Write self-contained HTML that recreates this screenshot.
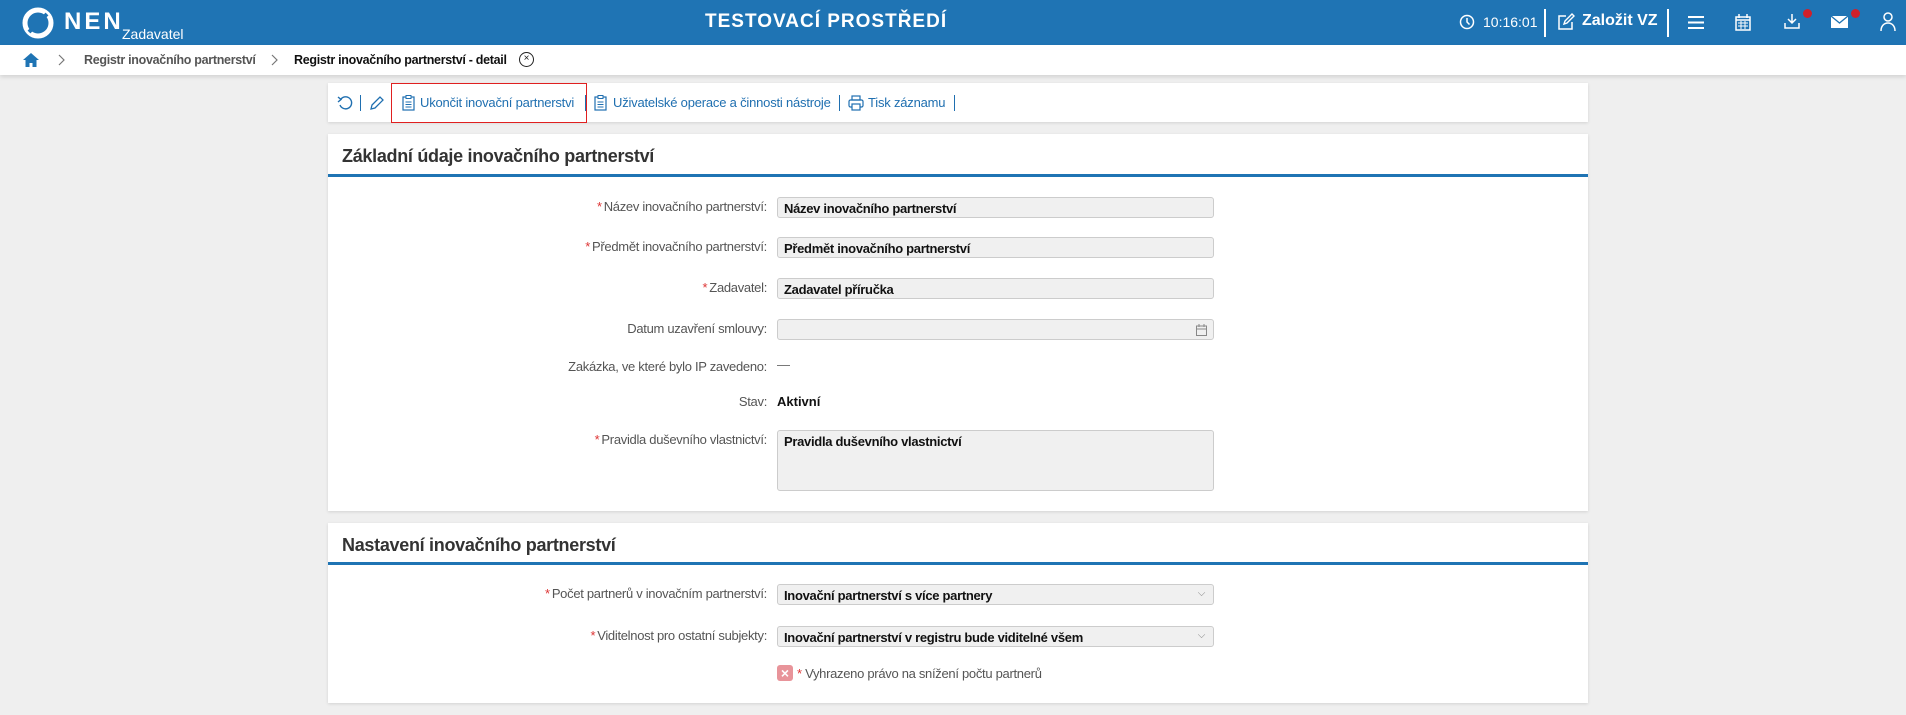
<!DOCTYPE html>
<html><head><meta charset="utf-8">
<style>
*{box-sizing:border-box;margin:0;padding:0}
body{width:1906px;height:715px;background:#efefef;font-family:"Liberation Sans",Arial,sans-serif;position:relative;overflow:hidden;color:#222}
.a{position:absolute;white-space:nowrap}
.hdr{left:0;top:0;width:1906px;height:45px;background:#1f74b4}
.w{color:#fff}
.bc{left:0;top:45px;width:1906px;height:30px;background:#fff;box-shadow:0 2px 4px rgba(0,0,0,.12)}
.card{background:#fff;box-shadow:0 1px 3px rgba(0,0,0,.12)}
.tb{font-size:13px;color:#1f6fb0;letter-spacing:-.2px}
.sep{width:1px;height:16px;background:#1f6fb0}
.h{font-size:18px;font-weight:bold;color:#333;letter-spacing:-.3px}
.line{height:3px;background:#1f74b4}
.lbl{font-size:13px;color:#555;text-align:right;right:1139px;letter-spacing:-.3px}
.lbl b{color:#d33;font-weight:normal;margin-right:2px}
.inp{left:777px;width:437px;height:21px;background:#f0f0f0;border:1px solid #ccc;border-radius:3px;font-size:13px;font-weight:bold;padding:3px 6px;letter-spacing:-.3px;color:#111}
.chev{position:absolute;right:8px;top:3px;font-size:10px;color:#888;font-weight:normal}
</style></head><body>
<div class="a hdr"></div>
<svg class="a" style="left:22px;top:7px" width="32" height="32" viewBox="0 0 32 32"><circle cx="16" cy="16" r="13" fill="none" stroke="#fff" stroke-width="5"/><path d="M7 25 L25 7" stroke="#1f74b4" stroke-width="4"/></svg>
<div class="a w" style="left:64px;top:8px;font-size:24px;font-weight:bold;letter-spacing:3px">NEN</div>
<div class="a w" style="left:122px;top:26px;font-size:14px">Zadavatel</div>
<div class="a w" style="left:705px;top:11px;font-size:19px;font-weight:bold;letter-spacing:1px">TESTOVACÍ PROSTŘEDÍ</div>
<svg class="a" style="left:1459px;top:14px" width="16" height="16" viewBox="0 0 16 16"><circle cx="8" cy="8" r="6.5" fill="none" stroke="#fff" stroke-width="1.5"/><path d="M8 4v4l2.5 2.5" fill="none" stroke="#fff" stroke-width="1.5"/></svg>
<div class="a w" style="left:1483px;top:14px;font-size:14px">10:16:01</div>
<div class="a" style="left:1544px;top:9px;width:2px;height:28px;background:#fff"></div>
<svg class="a" style="left:1557px;top:13px" width="18" height="18" viewBox="0 0 18 18"><path d="M9 3H2v13h13V9" fill="none" stroke="#fff" stroke-width="1.5"/><path d="M7 11l1-3 7-7 2 2-7 7z" fill="none" stroke="#fff" stroke-width="1.4"/></svg>
<div class="a w" style="left:1582px;top:12px;font-size:16px;font-weight:bold">Založit VZ</div>
<div class="a" style="left:1667px;top:9px;width:2px;height:28px;background:#fff"></div>
<svg class="a" style="left:1688px;top:15px" width="16" height="15"><path d="M0 2h16M0 7.5h16M0 13h16" stroke="#fff" stroke-width="2"/></svg>
<svg class="a" style="left:1735px;top:14px" width="16" height="17" viewBox="0 0 16 17"><rect x="1" y="3" width="14" height="13" fill="none" stroke="#fff" stroke-width="1.5"/><path d="M4 0v4M12 0v4M1 6h14" stroke="#fff" stroke-width="1.5"/><path d="M3 9h10M3 12h10M6 7v8M10 7v8" stroke="#fff" stroke-width="1"/></svg>
<svg class="a" style="left:1784px;top:13px" width="16" height="17" viewBox="0 0 16 17"><path d="M8 1v9M4 6l4 4 4-4" fill="none" stroke="#fff" stroke-width="1.5"/><path d="M1 10v5h14v-5" fill="none" stroke="#fff" stroke-width="1.5"/></svg>
<div class="a" style="left:1803px;top:9px;width:9px;height:9px;border-radius:50%;background:#d0202a"></div>
<svg class="a" style="left:1831px;top:16px" width="17" height="12" viewBox="0 0 17 12"><rect width="17" height="12" fill="#fff"/><path d="M0 0l8.5 7L17 0" fill="none" stroke="#1f74b4" stroke-width="1.3"/></svg>
<div class="a" style="left:1851px;top:9px;width:9px;height:9px;border-radius:50%;background:#d0202a"></div>
<svg class="a" style="left:1880px;top:12px" width="16" height="19" viewBox="0 0 16 19"><circle cx="8" cy="5" r="4" fill="none" stroke="#fff" stroke-width="1.5"/><path d="M1 19c0-5 3-8 7-8s7 3 7 8" fill="none" stroke="#fff" stroke-width="1.5"/></svg>

<div class="a bc"></div>
<svg class="a" style="left:22px;top:52px" width="18" height="16" viewBox="0 0 18 16"><path d="M9 1L1 8h2.5v7h4v-4h3v4h4V8H17z" fill="#1f74b4"/></svg>
<svg class="a" style="left:58px;top:54px" width="7" height="12"><path d="M1 1l5 5-5 5" fill="none" stroke="#777" stroke-width="1.2"/></svg>
<div class="a" style="left:84px;top:53px;font-size:12.5px;color:#555;font-weight:bold;letter-spacing:-.3px">Registr inovačního partnerství</div>
<svg class="a" style="left:271px;top:54px" width="7" height="12"><path d="M1 1l5 5-5 5" fill="none" stroke="#777" stroke-width="1.2"/></svg>
<div class="a" style="left:294px;top:53px;font-size:12.5px;color:#111;font-weight:bold;letter-spacing:-.3px">Registr inovačního partnerství - detail</div>
<div class="a" style="left:519px;top:52px;width:15px;height:15px;border:1.5px solid #222;border-radius:50%;font-size:10px;line-height:12px;text-align:center">×</div>

<div class="a card" style="left:328px;top:83px;width:1260px;height:39px"></div>
<svg class="a" style="left:337px;top:95px" width="16" height="16" viewBox="0 0 16 16"><path d="M4 4a6 6 0 1 1-1 6" fill="none" stroke="#1f6fb0" stroke-width="1.4"/><path d="M1 2l3 2.5L1 7" fill="none" stroke="#1f6fb0" stroke-width="1.4"/></svg>
<div class="a sep" style="left:360px;top:95px"></div>
<svg class="a" style="left:369px;top:95px" width="15" height="16" viewBox="0 0 15 16"><path d="M2 14l1-4 8-8 3 3-8 8z M2 14l4-1" fill="none" stroke="#1f6fb0" stroke-width="1.3"/></svg>
<div class="a sep" style="left:391px;top:95px"></div>
<div class="a" style="left:391px;top:83px;width:196px;height:40px;border:1px solid #e02020"></div>
<svg class="a" style="left:402px;top:95px" width="13" height="16" viewBox="0 0 13 16"><rect x="1" y="2" width="11" height="13" fill="none" stroke="#1f6fb0" stroke-width="1.2"/><rect x="4" y="0.5" width="5" height="3" fill="#fff" stroke="#1f6fb0"/><path d="M3.5 7h6M3.5 9.5h6M3.5 12h6" stroke="#1f6fb0"/></svg>
<div class="a tb" style="left:420px;top:95px">Ukončit inovační partnerstvi</div>
<div class="a sep" style="left:585px;top:95px"></div>
<svg class="a" style="left:594px;top:95px" width="13" height="16" viewBox="0 0 13 16"><rect x="1" y="2" width="11" height="13" fill="none" stroke="#1f6fb0" stroke-width="1.2"/><rect x="4" y="0.5" width="5" height="3" fill="#fff" stroke="#1f6fb0"/><path d="M3.5 7h6M3.5 9.5h6M3.5 12h6" stroke="#1f6fb0"/></svg>
<div class="a tb" style="left:613px;top:95px">Uživatelské operace a činnosti nástroje</div>
<div class="a sep" style="left:839px;top:95px"></div>
<svg class="a" style="left:848px;top:95px" width="16" height="16" viewBox="0 0 16 16"><rect x="4" y="1" width="8" height="4" fill="none" stroke="#1f6fb0" stroke-width="1.2"/><rect x="1" y="5" width="14" height="7" rx="1.5" fill="none" stroke="#1f6fb0" stroke-width="1.2"/><rect x="4" y="9" width="8" height="6" fill="#fff" stroke="#1f6fb0" stroke-width="1.2"/></svg>
<div class="a tb" style="left:868px;top:95px">Tisk záznamu</div>
<div class="a sep" style="left:954px;top:95px"></div>

<div class="a card" style="left:328px;top:134px;width:1260px;height:377px"></div>
<div class="a h" style="left:342px;top:146px">Základní údaje inovačního partnerství</div>
<div class="a line" style="left:328px;top:174px;width:1260px"></div>

<div class="a lbl" style="top:199px"><b>*</b>Název inovačního partnerství:</div>
<div class="a inp" style="top:197px">Název inovačního partnerství</div>
<div class="a lbl" style="top:239px"><b>*</b>Předmět inovačního partnerství:</div>
<div class="a inp" style="top:237px">Předmět inovačního partnerství</div>
<div class="a lbl" style="top:280px"><b>*</b>Zadavatel:</div>
<div class="a inp" style="top:278px">Zadavatel příručka</div>
<div class="a lbl" style="top:321px">Datum uzavření smlouvy:</div>
<div class="a inp" style="top:319px"><svg style="position:absolute;right:6px;top:4px" width="11" height="12" viewBox="0 0 11 12"><rect x=".5" y="2" width="10" height="9.5" fill="none" stroke="#888"/><path d="M3 0v3M8 0v3M.5 5h10" stroke="#888"/></svg></div>
<div class="a lbl" style="top:359px">Zakázka, ve které bylo IP zavedeno:</div>
<div class="a" style="left:777px;top:357px;font-size:13px;color:#666">—</div>
<div class="a lbl" style="top:394px">Stav:</div>
<div class="a" style="left:777px;top:394px;font-size:13px;font-weight:bold;color:#111">Aktivní</div>
<div class="a lbl" style="top:432px"><b>*</b>Pravidla duševního vlastnictví:</div>
<div class="a inp" style="top:430px;height:61px">Pravidla duševního vlastnictví</div>

<div class="a card" style="left:328px;top:523px;width:1260px;height:180px"></div>
<div class="a h" style="left:342px;top:535px">Nastavení inovačního partnerství</div>
<div class="a line" style="left:328px;top:562px;width:1260px"></div>
<div class="a lbl" style="top:586px"><b>*</b>Počet partnerů v inovačním partnerství:</div>
<div class="a inp" style="top:584px">Inovační partnerství s více partnery<span class="chev">⌵</span></div>
<div class="a lbl" style="top:628px"><b>*</b>Viditelnost pro ostatní subjekty:</div>
<div class="a inp" style="top:626px">Inovační partnerství v registru bude viditelné všem<span class="chev">⌵</span></div>
<div class="a" style="left:777px;top:665px;width:16px;height:16px;background:#e8949a;border-radius:3px;color:#fff;font-size:14px;font-weight:bold;line-height:16px;text-align:center">×</div>
<div class="a" style="left:797px;top:666px;font-size:13px;color:#555;letter-spacing:-.3px"><span style="color:#d33">*</span> Vyhrazeno právo na snížení počtu partnerů</div>
</body></html>
